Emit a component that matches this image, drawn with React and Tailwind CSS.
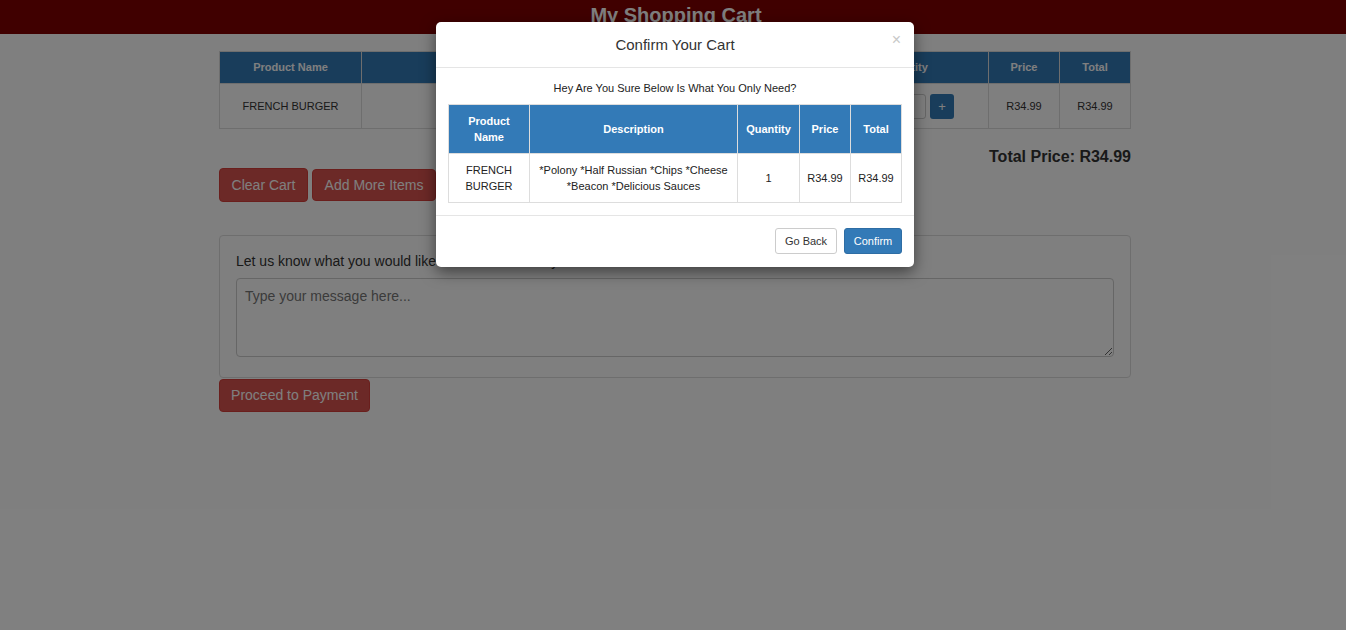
import React from "react";

const font = { fontFamily: '"Liberation Sans", Arial, sans-serif' };

export default function App() {
  return (
    <div className="relative min-h-[630px] w-full bg-white text-[#333]" style={font}>
      {/* Header bar */}
      <div className="h-[34px] bg-[#800000] flex items-start justify-center">
        <h1 className="text-[20px] font-bold text-white leading-[30px] ml-[6px]">My Shopping Cart</h1>
      </div>

      <div className="w-[912px] ml-[219px]">
        {/* Main cart table */}
        <table className="mt-[17px] w-full border-collapse text-[11px]">
          <thead>
            <tr className="bg-[#337ab7] text-white h-[32px]">
              <th className="w-[142px] border border-[#ddd] font-bold">Product Name</th>
              <th className="w-[461px] border border-[#ddd] font-bold">Description</th>
              <th className="w-[166px] border border-[#ddd] font-bold">Quantity</th>
              <th className="w-[71px] border border-[#ddd] font-bold">Price</th>
              <th className="w-[71px] border border-[#ddd] font-bold">Total</th>
            </tr>
          </thead>
          <tbody>
            <tr className="h-[45px] text-center">
              <td className="border border-[#ddd]">FRENCH BURGER</td>
              <td className="border border-[#ddd]">
                <div className="mx-auto max-w-[220px] leading-[16px]">*Polony *Half Russian *Chips *Cheese *Beacon *Delicious Sauces</div>
              </td>
              <td className="border border-[#ddd]">
                <div className="flex items-center justify-center gap-[4px] pl-[1px]">
                  <div className="w-[68px] h-[25px] border border-[#ccc] rounded-[3px] bg-white flex items-center justify-center">1</div>
                  <button className="w-[24px] h-[25px] rounded-[3px] bg-[#337ab7] text-white text-[13px] leading-none">+</button>
                </div>
              </td>
              <td className="border border-[#ddd]">R34.99</td>
              <td className="border border-[#ddd]">R34.99</td>
            </tr>
          </tbody>
        </table>

        <div className="mt-[18px] text-right text-[16px] font-bold leading-[20px]">Total Price: R34.99</div>

        <div className="mt-[1px] flex items-start gap-[4px]">
          <button className="h-[34px] w-[89px] rounded-[4px] bg-[#d9534f] border border-[#d43f3a] text-white text-[14px] font-light">Clear Cart</button>
          <button className="mt-[1px] h-[32px] w-[124px] rounded-[4px] bg-[#d9534f] border border-[#d43f3a] text-white text-[14px] font-light">Add More Items</button>
        </div>

        {/* Message panel */}
        <div className="mt-[33px] border border-[#ddd] rounded-[4px] px-[16px] pt-[17px] pb-[20px]">
          <label className="block text-[14px] leading-[16px] text-[#333]">Let us know what you would like more or less of in your order</label>
          <textarea
            className="mt-[9px] block w-full h-[79px] border border-[#ccc] rounded-[4px] px-[8px] py-[9px] text-[14px] leading-[16px] placeholder:text-[#777] outline-none"
            placeholder="Type your message here..."
            style={font}
          />
        </div>

        <button className="mt-[1px] h-[33px] w-[151px] rounded-[4px] bg-[#d9534f] border border-[#d43f3a] text-white text-[14px] font-light">Proceed to Payment</button>
      </div>

      {/* Backdrop */}
      <div className="absolute inset-0 bg-black/50" />

      {/* Modal */}
      <div className="absolute top-[22px] left-[436px] w-[478px] bg-white rounded-[5px] shadow-[0_5px_15px_rgba(0,0,0,0.5)]">
        <div className="relative h-[46px] border-b border-[#e5e5e5] flex items-center justify-center">
          <h4 className="text-[15px] text-[#333] leading-none">Confirm Your Cart</h4>
          <span className="absolute right-[13px] top-[10px] text-[16px] text-[#c8c8c8] leading-none">×</span>
        </div>
        <div className="px-[12px] pt-[13px] pb-[12px]">
          <p className="text-center text-[11px] leading-[14px] text-[#222]">Hey Are You Sure Below Is What You Only Need?</p>
          <table className="mt-[9px] w-[454px] border-collapse text-[11px]">
            <thead>
              <tr className="bg-[#337ab7] text-white h-[49px]">
                <th className="w-[81px] border border-[#ddd] font-bold leading-[16px] px-[12px]">Product Name</th>
                <th className="w-[208px] border border-[#ddd] font-bold">Description</th>
                <th className="w-[62px] border border-[#ddd] font-bold">Quantity</th>
                <th className="w-[51px] border border-[#ddd] font-bold">Price</th>
                <th className="w-[51px] border border-[#ddd] font-bold">Total</th>
              </tr>
            </thead>
            <tbody>
              <tr className="h-[49px] text-center text-[#222]">
                <td className="border border-[#ddd] leading-[16px] px-[16px]">FRENCH BURGER</td>
                <td className="border border-[#ddd] leading-[16px] px-[8px]">*Polony *Half Russian *Chips *Cheese *Beacon *Delicious Sauces</td>
                <td className="border border-[#ddd]">1</td>
                <td className="border border-[#ddd]">R34.99</td>
                <td className="border border-[#ddd]">R34.99</td>
              </tr>
            </tbody>
          </table>
        </div>
        <div className="border-t border-[#e5e5e5] px-[12px] pt-[12px] pb-[13px] flex justify-end gap-[7px]">
          <button className="h-[26px] w-[62px] rounded-[3px] border border-[#ccc] bg-white text-[11px] text-[#333]">Go Back</button>
          <button className="h-[26px] w-[58px] rounded-[3px] border border-[#2e6da4] bg-[#337ab7] text-[11px] text-white">Confirm</button>
        </div>
      </div>
    </div>
  );
}
